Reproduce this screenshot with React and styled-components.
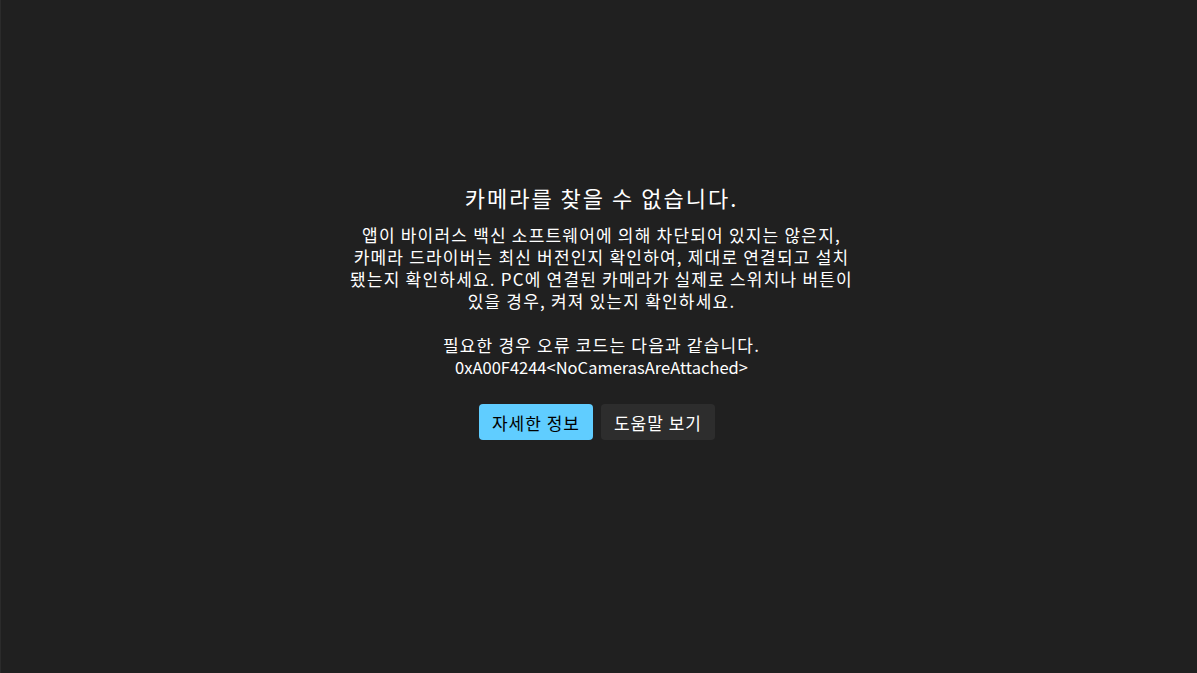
import React from "react";
import styled, { createGlobalStyle } from "styled-components";

const GlobalStyle = createGlobalStyle`
  html, body {
    margin: 0;
    padding: 0;
    background: #202020;
  }
  body {
    font-family: "Noto Sans CJK KR", "Noto Sans", sans-serif;
    color: #ffffff;
  }
`;

const Screen = styled.div`
  height: 673px;
  box-sizing: border-box;
  border-left: 1px solid #2b2b2b;
  background: #202020;
  display: flex;
  flex-direction: column;
  align-items: center;
  padding-top: 182px;
`;

const Title = styled.h1`
  margin: 0 0 12px 5px;
  font-size: 22px;
  font-weight: 400;
  line-height: 30px;
  letter-spacing: 2px;
`;

const Message = styled.p`
  margin: 0 0 0 5px;
  width: 560px;
  font-size: 17px;
  line-height: 22px;
  text-align: center;
  word-break: keep-all;
  letter-spacing: 1.2px;
`;

const Code = styled.span`
  letter-spacing: 0;
  font-size: 16.5px;
`;

const Actions = styled.div`
  display: flex;
  gap: 8px;
  margin: 26px 4px 0 0;
`;

const Button = styled.button`
  width: 114px;
  height: 36px;
  padding: 0;
  border: none;
  border-radius: 4px;
  font-family: inherit;
  font-size: 17px;
  letter-spacing: 1px;
  background: ${(p) => (p.$primary ? "#60cdff" : "#2d2d2d")};
  color: ${(p) => (p.$primary ? "#000000" : "#ffffff")};
  cursor: pointer;
`;

export default function App() {
  return (
    <>
      <GlobalStyle />
      <Screen>
        <Title>카메라를 찾을 수 없습니다.</Title>
        <Message>
          앱이 바이러스 백신 소프트웨어에 의해 차단되어 있지는 않은지,
          <br />
          카메라 드라이버는 최신 버전인지 확인하여, 제대로 연결되고 설치
          <br />
          됐는지 확인하세요. PC에 연결된 카메라가 실제로 스위치나 버튼이
          <br />
          있을 경우, 켜져 있는지 확인하세요.
          <br />
          <br />
          필요한 경우 오류 코드는 다음과 같습니다.
          <br />
          <Code>0xA00F4244&lt;NoCamerasAreAttached&gt;</Code>
        </Message>
        <Actions>
          <Button $primary>자세한 정보</Button>
          <Button>도움말 보기</Button>
        </Actions>
      </Screen>
    </>
  );
}
